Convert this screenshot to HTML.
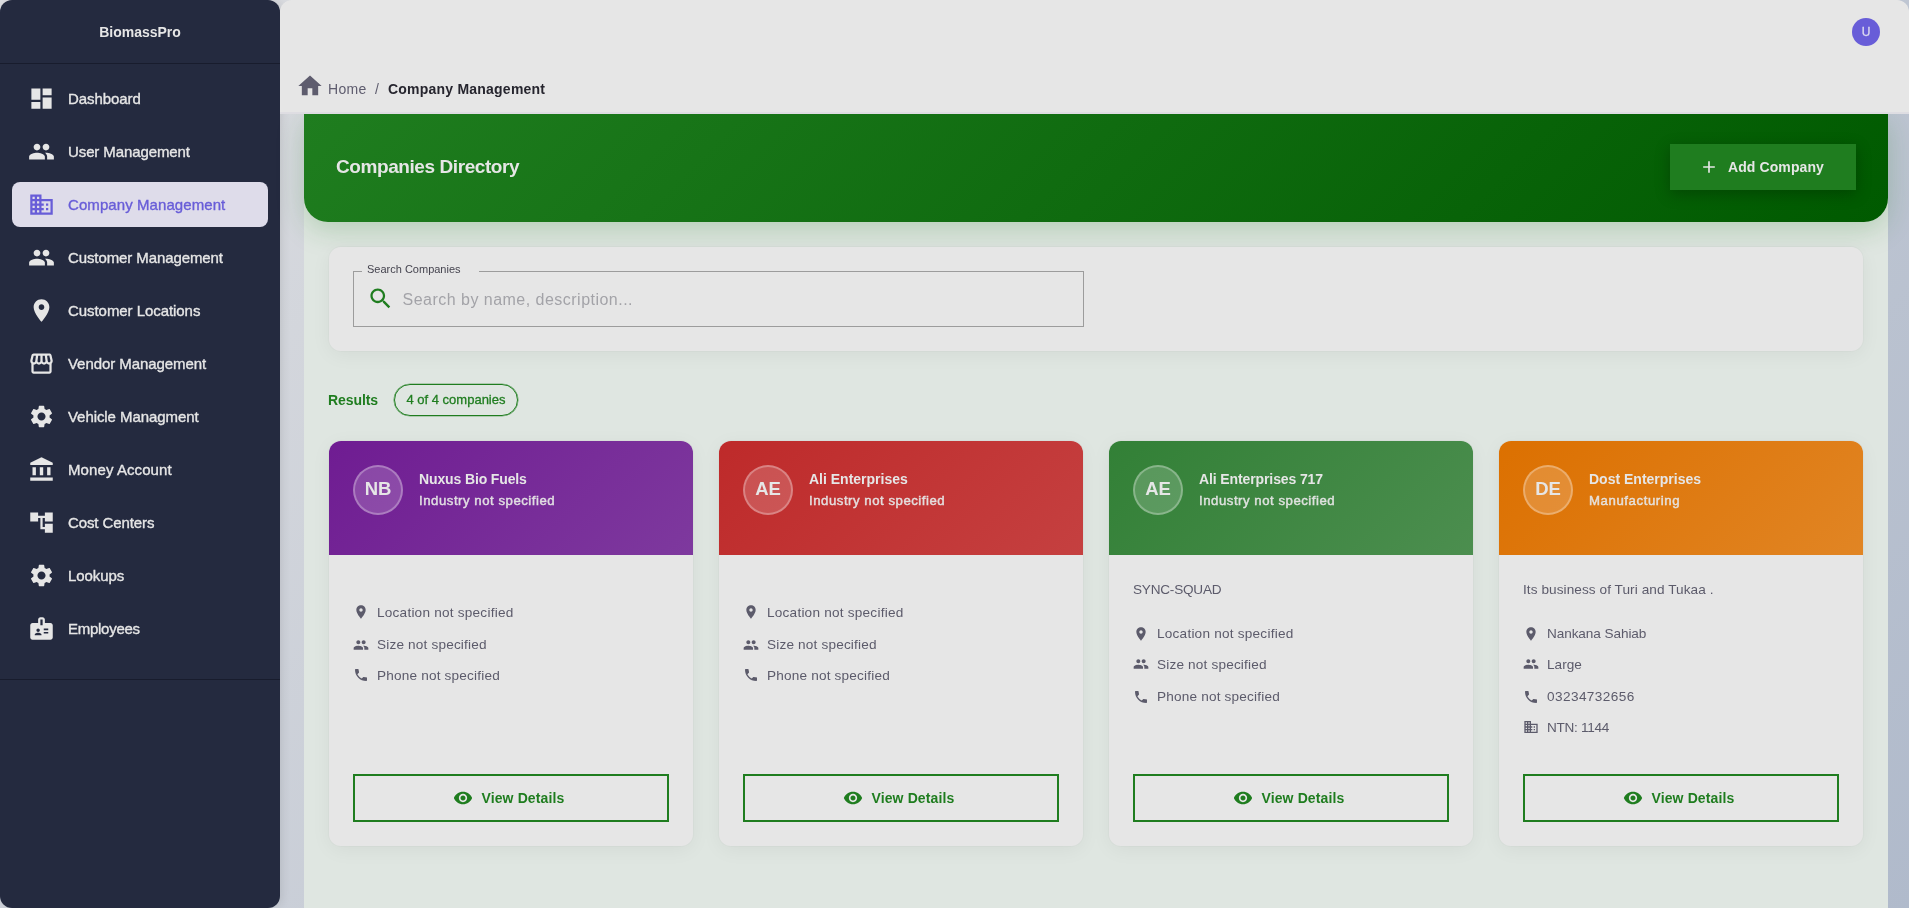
<!DOCTYPE html>
<html lang="en">
<head>
<meta charset="utf-8">
<title>BiomassPro - Company Management</title>
<style>
*{box-sizing:border-box;margin:0;padding:0}
html,body{width:1909px;height:908px;overflow:hidden}
body{font-family:"Liberation Sans",sans-serif;position:relative;
 background:linear-gradient(135deg,#dddee1 0%,#b0bacb 100%);color:#5c5b6b}
.abs{position:absolute}
svg{display:block}
.t{position:absolute;white-space:nowrap;line-height:1}

/* sidebar */
#sidebar{position:absolute;left:0;top:0;width:280px;height:908px;background:#242a3f;border-radius:12px;box-shadow:2px 0 10px rgba(0,0,0,.10)}
#sidebar .brand{left:0;width:280px;text-align:center;top:25px;font-size:14px;font-weight:700;color:#e6e6e6}
#sidebar .hr{position:absolute;left:0;width:280px;height:1px;background:#181c2d}
.nav{position:absolute;left:12px;width:256px;height:45px;border-radius:8px;color:#e6e6e6}
.nav svg{position:absolute;left:15.8px;top:9px;width:27px;height:27px;fill:currentColor}
.nav .t{left:56px;top:15px;font-size:15px;font-weight:400;-webkit-text-stroke:.35px currentColor}
.nav.sel{background:#dedcea;color:#685dd8}

/* topbar */
#topbar{position:absolute;left:280px;top:0;width:1629px;height:114px;border-radius:12px 12px 0 0;
 background:linear-gradient(180deg,#e6e6e6 0,#e6e6e6 111.5px,#dedde2 112.5px,#dedde2 114px)}
#avatar{position:absolute;left:1852px;top:18px;width:28px;height:28px;border-radius:50%;background:#685dd8;color:#dddbf0;font-size:12px;text-align:center;line-height:28px;-webkit-text-stroke:.3px currentColor}

/* main */
#main{position:absolute;left:304px;top:113px;width:1584px;height:795px;background:#dfe6e1}
#banner{position:absolute;left:304px;top:114px;width:1584px;height:108px;border-radius:0 0 24px 24px;
 background:linear-gradient(135deg,#1f7d1f 0%,#005a00 100%);box-shadow:0 8px 28px rgba(31,125,31,.22)}
#addbtn{position:absolute;left:1670px;top:144px;width:186px;height:46px;background:#1f7d1f;box-shadow:0 4px 14px rgba(0,0,0,.25);color:#e6e6e6}
.card{position:absolute;background:#e6e6e6;border-radius:12px;box-shadow:0 4px 20px rgba(0,0,0,.05),0 0 0 1px rgba(0,0,0,.025);overflow:hidden}

/* breadcrumb */
#crumb svg{position:absolute;left:295.6px;top:72px;width:28px;height:28px;fill:#5e5c6e}
#crumb .home{left:328px;top:82px;font-size:14px;color:#5e5c6e;letter-spacing:.35px}
#crumb .sep{left:375px;top:82px;font-size:14px;color:#5e5c6e}
#crumb .cur{left:388px;top:82px;font-size:14px;font-weight:700;color:#26252e;letter-spacing:.22px}
#title{left:336px;top:157px;font-size:19px;font-weight:700;color:#e6e6e6;letter-spacing:-.42px}
#addbtn svg{position:absolute;left:29px;top:13px;width:20px;height:20px;fill:#e6e6e6}
#addbtn .t{left:58px;top:16px;font-size:14px;font-weight:700;color:#e6e6e6;letter-spacing:.1px}
/* search */
#searchcard{left:329px;top:247px;width:1534px;height:104px}
#field{position:absolute;left:353px;top:271px;width:731px;height:56px;border:1px solid #9c9c9c}
#field .gap{position:absolute;left:8px;top:-1px;width:117px;height:1px;background:#e6e6e6}
#field .lab{left:13px;top:-9px;font-size:11px;color:#45444f;line-height:12px}
#field svg{position:absolute;left:12.8px;top:13.1px;width:27.2px;height:27.2px;fill:#1f7d1f}
#field .ph{left:48.5px;top:20px;font-size:16px;color:#a3a3a8;letter-spacing:.48px}
#results{left:328px;top:393px;font-size:14px;font-weight:700;color:#1f7d1f;letter-spacing:-.08px}
#chip{position:absolute;left:394px;top:384px;width:124px;height:32px;border:1px solid #1f7d1f;box-shadow:0 0 0 .35px #1f7d1f;border-radius:16px;color:#1f7d1f;font-size:13px;text-align:center;line-height:30px;-webkit-text-stroke:.3px currentColor}
/* company cards */
.cc{top:441px;width:364px;height:405px}
.cc .hd{position:absolute;left:0;top:0;width:364px;height:114px}
.cc .av{position:absolute;left:24px;top:24px;width:50px;height:50px;border-radius:50%;background:rgba(255,255,255,.18);border:2px solid rgba(255,255,255,.28);color:#e6e6e6;font-size:18.5px;font-weight:700;text-align:center;line-height:44.4px}
.cc .nm{left:90px;top:31px;font-size:14px;font-weight:700;color:#e6e6e6}
.cc .ind{left:90px;top:52.5px;font-size:13.2px;color:rgba(230,230,230,.92);-webkit-text-stroke:.45px currentColor}
.cc .desc{left:24px;top:142px;font-size:13.6px;color:#5c5b6b}
.row{position:absolute;left:24px;height:16px}
.row svg{position:absolute;left:0;top:0;width:16px;height:16px;fill:#5c5b6b}
.row .t{left:24px;top:1.3px;font-size:13.6px;color:#5c5b6b}
.vbtn{position:absolute;left:24px;top:333px;width:316px;height:48px;border:2px solid #1f7d1f;color:#1f7d1f}
.vbtn svg{position:absolute;left:98px;top:12px;width:20px;height:20px;fill:#1f7d1f}
.vbtn .t{left:126.5px;top:15px;font-size:14px;font-weight:700;color:#1f7d1f;letter-spacing:.12px}
#root{position:absolute;left:0;top:0;width:1909px;height:908px;will-change:transform}
</style>
</head>
<body>
<div id="root">
<div id="sidebar">
 <div class="t brand">BiomassPro</div>
 <div class="hr" style="top:63px"></div>
 <div class="nav" style="top:76px"><svg viewBox="0 0 24 24"><path d="M3 13h8V3H3v10zm0 8h8v-6H3v6zm10 0h8V11h-8v10zm0-18v6h8V3h-8z"/></svg><div class="t" style="letter-spacing:-0.08px">Dashboard</div></div>
 <div class="nav" style="top:129px"><svg viewBox="0 0 24 24"><path d="M16 11c1.66 0 2.99-1.34 2.99-3S17.66 5 16 5c-1.66 0-3 1.34-3 3s1.34 3 3 3zm-8 0c1.66 0 2.99-1.34 2.99-3S9.66 5 8 5C6.34 5 5 6.34 5 8s1.34 3 3 3zm0 2c-2.33 0-7 1.17-7 3.5V19h14v-2.5c0-2.33-4.67-3.5-7-3.5zm8 0c-.29 0-.62.02-.97.05 1.16.84 1.97 1.97 1.97 3.45V19h6v-2.5c0-2.33-4.67-3.5-7-3.5z"/></svg><div class="t" style="letter-spacing:-0.1px">User Management</div></div>
 <div class="nav sel" style="top:182px"><svg viewBox="0 0 24 24"><path d="M12 7V3H2v18h20V7H12zM6 19H4v-2h2v2zm0-4H4v-2h2v2zm0-4H4V9h2v2zm0-4H4V5h2v2zm4 12H8v-2h2v2zm0-4H8v-2h2v2zm0-4H8V9h2v2zm0-4H8V5h2v2zm10 12h-8v-2h2v-2h-2v-2h2v-2h-2V9h8v10zm-2-8h-2v2h2v-2zm0 4h-2v2h2v-2z"/></svg><div class="t" style="letter-spacing:0.08px">Company Management</div></div>
 <div class="nav" style="top:235px"><svg viewBox="0 0 24 24"><path d="M16 11c1.66 0 2.99-1.34 2.99-3S17.66 5 16 5c-1.66 0-3 1.34-3 3s1.34 3 3 3zm-8 0c1.66 0 2.99-1.34 2.99-3S9.66 5 8 5C6.34 5 5 6.34 5 8s1.34 3 3 3zm0 2c-2.33 0-7 1.17-7 3.5V19h14v-2.5c0-2.33-4.67-3.5-7-3.5zm8 0c-.29 0-.62.02-.97.05 1.16.84 1.97 1.97 1.97 3.45V19h6v-2.5c0-2.33-4.67-3.5-7-3.5z"/></svg><div class="t" style="letter-spacing:-0.1px">Customer Management</div></div>
 <div class="nav" style="top:288px"><svg viewBox="0 0 24 24"><path d="M12 2C8.13 2 5 5.13 5 9c0 5.25 7 13 7 13s7-7.75 7-13c0-3.87-3.13-7-7-7zm0 9.5c-1.38 0-2.5-1.12-2.5-2.5s1.12-2.5 2.5-2.5 2.5 1.12 2.5 2.5-1.12 2.5-2.5 2.5z"/></svg><div class="t" style="letter-spacing:-0.06px">Customer Locations</div></div>
 <div class="nav" style="top:341px"><svg viewBox="0 0 24 24"><path d="M21.9 8.89l-1.05-4.37c-.22-.9-1-1.52-1.91-1.52H5.05c-.9 0-1.69.63-1.9 1.52L2.1 8.89c-.24 1.02-.02 2.06.62 2.88.08.11.19.19.28.29V19c0 1.1.9 2 2 2h14c1.1 0 2-.9 2-2v-6.94c.09-.09.2-.18.28-.28.64-.82.87-1.87.62-2.89zm-2.99-3.9l1.05 4.37c.1.42.01.84-.25 1.17-.14.18-.44.47-.94.47-.61 0-1.14-.49-1.21-1.14L16.98 5l1.93-.01zM13 5h1.96l.54 4.52c.05.39-.07.78-.33 1.07-.22.26-.54.41-.95.41-.67 0-1.22-.59-1.22-1.31V5zM8.49 9.52L9.04 5H11v4.69c0 .72-.55 1.31-1.29 1.31-.34 0-.65-.15-.89-.41-.25-.29-.37-.68-.33-1.07zm-4.45-.16L5.05 5h1.97l-.58 4.86c-.08.65-.6 1.14-1.21 1.14-.49 0-.8-.29-.93-.47-.27-.32-.36-.75-.26-1.17zM5 19v-6.03c.08.01.15.03.23.03.87 0 1.66-.36 2.24-.95.6.6 1.4.95 2.31.95.87 0 1.65-.36 2.23-.93.59.57 1.39.93 2.29.93.84 0 1.64-.35 2.24-.95.58.59 1.37.95 2.24.95.08 0 .15-.02.23-.03V19H5z"/></svg><div class="t" style="letter-spacing:-0.07px">Vendor Management</div></div>
 <div class="nav" style="top:394px"><svg viewBox="0 0 24 24"><path d="M19.14 12.94c.04-.3.06-.61.06-.94 0-.32-.02-.64-.07-.94l2.03-1.58c.18-.14.23-.41.12-.61l-1.92-3.32c-.12-.22-.37-.29-.59-.22l-2.39.96c-.5-.38-1.03-.7-1.62-.94l-.36-2.54c-.04-.24-.24-.41-.48-.41h-3.84c-.24 0-.43.17-.47.41l-.36 2.54c-.59.24-1.13.57-1.62.94l-2.39-.96c-.22-.08-.47 0-.59.22L2.74 8.87c-.12.21-.08.47.12.61l2.03 1.58c-.05.3-.09.63-.09.94s.02.64.07.94l-2.03 1.58c-.18.14-.23.41-.12.61l1.92 3.32c.12.22.37.29.59.22l2.39-.96c.5.38 1.03.7 1.62.94l.36 2.54c.05.24.24.41.48.41h3.84c.24 0 .44-.17.47-.41l.36-2.54c.59-.24 1.13-.56 1.62-.94l2.39.96c.22.08.47 0 .59-.22l1.92-3.32c.12-.22.07-.47-.12-.61l-2.01-1.58zM12 15.6c-1.98 0-3.6-1.62-3.6-3.6s1.62-3.6 3.6-3.6 3.6 1.62 3.6 3.6-1.62 3.6-3.6 3.6z"/></svg><div class="t" style="letter-spacing:-0.07px">Vehicle Managment</div></div>
 <div class="nav" style="top:447px"><svg viewBox="0 0 24 24"><path d="M4 10h3v7H4zM10.5 10h3v7h-3zM2 19h20v3H2zM17 10h3v7h-3zM12 1L2 6v2h20V6z"/></svg><div class="t" style="letter-spacing:0.09px">Money Account</div></div>
 <div class="nav" style="top:500px"><svg viewBox="0 0 24 24"><path d="M22 11V3h-7v3H9V3H2v8h7V8h2v10h4v3h7v-8h-7v3h-2V8h2v3z"/></svg><div class="t" style="letter-spacing:-0.1px">Cost Centers</div></div>
 <div class="nav" style="top:553px"><svg viewBox="0 0 24 24"><path d="M19.14 12.94c.04-.3.06-.61.06-.94 0-.32-.02-.64-.07-.94l2.03-1.58c.18-.14.23-.41.12-.61l-1.92-3.32c-.12-.22-.37-.29-.59-.22l-2.39.96c-.5-.38-1.03-.7-1.62-.94l-.36-2.54c-.04-.24-.24-.41-.48-.41h-3.84c-.24 0-.43.17-.47.41l-.36 2.54c-.59.24-1.13.57-1.62.94l-2.39-.96c-.22-.08-.47 0-.59.22L2.74 8.87c-.12.21-.08.47.12.61l2.03 1.58c-.05.3-.09.63-.09.94s.02.64.07.94l-2.03 1.58c-.18.14-.23.41-.12.61l1.92 3.32c.12.22.37.29.59.22l2.39-.96c.5.38 1.03.7 1.62.94l.36 2.54c.05.24.24.41.48.41h3.84c.24 0 .44-.17.47-.41l.36-2.54c.59-.24 1.13-.56 1.62-.94l2.39.96c.22.08.47 0 .59-.22l1.92-3.32c.12-.22.07-.47-.12-.61l-2.01-1.58zM12 15.6c-1.98 0-3.6-1.62-3.6-3.6s1.62-3.6 3.6-3.6 3.6 1.62 3.6 3.6-1.62 3.6-3.6 3.6z"/></svg><div class="t" style="letter-spacing:-0.06px">Lookups</div></div>
 <div class="nav" style="top:606px"><svg viewBox="0 0 24 24"><path d="M20 7h-5V4c0-1.1-.9-2-2-2h-2c-1.1 0-2 .9-2 2v3H4c-1.1 0-2 .9-2 2v11c0 1.1.9 2 2 2h16c1.1 0 2-.9 2-2V9c0-1.1-.9-2-2-2zM9 12c.83 0 1.5.67 1.5 1.5S9.83 15 9 15s-1.5-.67-1.5-1.5S8.17 12 9 12zm3 6H6v-.75c0-1 2-1.5 3-1.5s3 .5 3 1.5V18zm1-9h-2V4h2v5zm5 7.5h-4V15h4v1.5zm0-3h-4V12h4v1.5z"/></svg><div class="t" style="letter-spacing:-0.27px">Employees</div></div>
 <div class="hr" style="top:679px"></div>
</div>
<div id="main"></div>
<div id="banner"></div>
<div id="topbar"></div>
<div id="avatar">U</div>
<div id="crumb"><svg viewBox="0 0 24 24"><path d="M10 20v-6h4v6h5v-8h3L12 3 2 12h3v8z"/></svg><div class="t home">Home</div><div class="t sep">/</div><div class="t cur">Company Management</div></div>
<div class="t" id="title">Companies Directory</div>
<div id="addbtn"><svg viewBox="0 0 24 24"><path d="M19 13h-6v6h-2v-6H5v-2h6V5h2v6h6v2z"/></svg><div class="t">Add Company</div></div>
<div class="card abs" id="searchcard"></div>
<div id="field"><div class="gap"></div><div class="t lab">Search Companies</div><svg viewBox="0 0 24 24"><path d="M15.5 14h-.79l-.28-.27C15.41 12.59 16 11.11 16 9.5 16 5.91 13.09 3 9.5 3S3 5.91 3 9.5 5.91 16 9.5 16c1.61 0 3.09-.59 4.23-1.57l.27.28v.79l5 4.99L20.49 19l-4.99-5zm-6 0C7.01 14 5 11.99 5 9.5S7.01 5 9.5 5 14 7.01 14 9.5 11.99 14 9.5 14z"/></svg><div class="t ph">Search by name, description...</div></div>
<div class="t" id="results">Results</div>
<div id="chip">4 of 4 companies</div>
<div class="card cc abs" style="left:329px"><div class="hd" style="background:linear-gradient(135deg,#6f1c92 0%,#7e399e 100%)"></div><div class="av">NB</div><div class="t nm" style="letter-spacing:-0.13px">Nuxus Bio Fuels</div><div class="t ind" style="letter-spacing:0.526px">Industry not specified</div><div class="row" style="top:163.3px"><svg viewBox="0 0 24 24"><path d="M12 2C8.13 2 5 5.13 5 9c0 5.25 7 13 7 13s7-7.75 7-13c0-3.87-3.13-7-7-7zm0 9.5c-1.38 0-2.5-1.12-2.5-2.5s1.12-2.5 2.5-2.5 2.5 1.12 2.5 2.5-1.12 2.5-2.5 2.5z"/></svg><div class="t" style="letter-spacing:0.225px">Location not specified</div></div><div class="row" style="top:195.5px"><svg viewBox="0 0 24 24"><path d="M16 11c1.66 0 2.99-1.34 2.99-3S17.66 5 16 5c-1.66 0-3 1.34-3 3s1.34 3 3 3zm-8 0c1.66 0 2.99-1.34 2.99-3S9.66 5 8 5C6.34 5 5 6.34 5 8s1.34 3 3 3zm0 2c-2.33 0-7 1.17-7 3.5V19h14v-2.5c0-2.33-4.67-3.5-7-3.5zm8 0c-.29 0-.62.02-.97.05 1.16.84 1.97 1.97 1.97 3.45V19h6v-2.5c0-2.33-4.67-3.5-7-3.5z"/></svg><div class="t" style="letter-spacing:0.172px">Size not specified</div></div><div class="row" style="top:226.3px"><svg viewBox="0 0 24 24"><path d="M6.62 10.79c1.44 2.83 3.76 5.14 6.59 6.59l2.2-2.2c.27-.27.67-.36 1.02-.24 1.12.37 2.33.57 3.57.57.55 0 1 .45 1 1V20c0 .55-.45 1-1 1-9.39 0-17-7.61-17-17 0-.55.45-1 1-1h3.5c.55 0 1 .45 1 1 0 1.25.2 2.45.57 3.57.11.35.03.74-.25 1.02l-2.2 2.2z"/></svg><div class="t" style="letter-spacing:0.186px">Phone not specified</div></div><div class="vbtn"><svg viewBox="0 0 24 24"><path d="M12 4.5C7 4.5 2.73 7.61 1 12c1.73 4.39 6 7.5 11 7.5s9.27-3.11 11-7.5c-1.73-4.39-6-7.5-11-7.5zM12 17c-2.76 0-5-2.24-5-5s2.24-5 5-5 5 2.24 5 5-2.24 5-5 5zm0-8c-1.66 0-3 1.34-3 3s1.34 3 3 3 3-1.34 3-3-1.34-3-3-3z"/></svg><div class="t">View Details</div></div></div>
<div class="card cc abs" style="left:719px"><div class="hd" style="background:linear-gradient(135deg,#be2a2a 0%,#c54040 100%)"></div><div class="av">AE</div><div class="t nm">Ali Enterprises</div><div class="t ind" style="letter-spacing:0.526px">Industry not specified</div><div class="row" style="top:163.3px"><svg viewBox="0 0 24 24"><path d="M12 2C8.13 2 5 5.13 5 9c0 5.25 7 13 7 13s7-7.75 7-13c0-3.87-3.13-7-7-7zm0 9.5c-1.38 0-2.5-1.12-2.5-2.5s1.12-2.5 2.5-2.5 2.5 1.12 2.5 2.5-1.12 2.5-2.5 2.5z"/></svg><div class="t" style="letter-spacing:0.225px">Location not specified</div></div><div class="row" style="top:195.5px"><svg viewBox="0 0 24 24"><path d="M16 11c1.66 0 2.99-1.34 2.99-3S17.66 5 16 5c-1.66 0-3 1.34-3 3s1.34 3 3 3zm-8 0c1.66 0 2.99-1.34 2.99-3S9.66 5 8 5C6.34 5 5 6.34 5 8s1.34 3 3 3zm0 2c-2.33 0-7 1.17-7 3.5V19h14v-2.5c0-2.33-4.67-3.5-7-3.5zm8 0c-.29 0-.62.02-.97.05 1.16.84 1.97 1.97 1.97 3.45V19h6v-2.5c0-2.33-4.67-3.5-7-3.5z"/></svg><div class="t" style="letter-spacing:0.172px">Size not specified</div></div><div class="row" style="top:226.3px"><svg viewBox="0 0 24 24"><path d="M6.62 10.79c1.44 2.83 3.76 5.14 6.59 6.59l2.2-2.2c.27-.27.67-.36 1.02-.24 1.12.37 2.33.57 3.57.57.55 0 1 .45 1 1V20c0 .55-.45 1-1 1-9.39 0-17-7.61-17-17 0-.55.45-1 1-1h3.5c.55 0 1 .45 1 1 0 1.25.2 2.45.57 3.57.11.35.03.74-.25 1.02l-2.2 2.2z"/></svg><div class="t" style="letter-spacing:0.186px">Phone not specified</div></div><div class="vbtn"><svg viewBox="0 0 24 24"><path d="M12 4.5C7 4.5 2.73 7.61 1 12c1.73 4.39 6 7.5 11 7.5s9.27-3.11 11-7.5c-1.73-4.39-6-7.5-11-7.5zM12 17c-2.76 0-5-2.24-5-5s2.24-5 5-5 5 2.24 5 5-2.24 5-5 5zm0-8c-1.66 0-3 1.34-3 3s1.34 3 3 3 3-1.34 3-3-1.34-3-3-3z"/></svg><div class="t">View Details</div></div></div>
<div class="card cc abs" style="left:1109px"><div class="hd" style="background:linear-gradient(135deg,#328036 0%,#4c8e4f 100%)"></div><div class="av">AE</div><div class="t nm" style="letter-spacing:-0.11px">Ali Enterprises 717</div><div class="t ind" style="letter-spacing:0.526px">Industry not specified</div><div class="t desc" style="letter-spacing:-0.228px">SYNC-SQUAD</div><div class="row" style="top:185px"><svg viewBox="0 0 24 24"><path d="M12 2C8.13 2 5 5.13 5 9c0 5.25 7 13 7 13s7-7.75 7-13c0-3.87-3.13-7-7-7zm0 9.5c-1.38 0-2.5-1.12-2.5-2.5s1.12-2.5 2.5-2.5 2.5 1.12 2.5 2.5-1.12 2.5-2.5 2.5z"/></svg><div class="t" style="letter-spacing:0.225px">Location not specified</div></div><div class="row" style="top:215.4px"><svg viewBox="0 0 24 24"><path d="M16 11c1.66 0 2.99-1.34 2.99-3S17.66 5 16 5c-1.66 0-3 1.34-3 3s1.34 3 3 3zm-8 0c1.66 0 2.99-1.34 2.99-3S9.66 5 8 5C6.34 5 5 6.34 5 8s1.34 3 3 3zm0 2c-2.33 0-7 1.17-7 3.5V19h14v-2.5c0-2.33-4.67-3.5-7-3.5zm8 0c-.29 0-.62.02-.97.05 1.16.84 1.97 1.97 1.97 3.45V19h6v-2.5c0-2.33-4.67-3.5-7-3.5z"/></svg><div class="t" style="letter-spacing:0.172px">Size not specified</div></div><div class="row" style="top:247.8px"><svg viewBox="0 0 24 24"><path d="M6.62 10.79c1.44 2.83 3.76 5.14 6.59 6.59l2.2-2.2c.27-.27.67-.36 1.02-.24 1.12.37 2.33.57 3.57.57.55 0 1 .45 1 1V20c0 .55-.45 1-1 1-9.39 0-17-7.61-17-17 0-.55.45-1 1-1h3.5c.55 0 1 .45 1 1 0 1.25.2 2.45.57 3.57.11.35.03.74-.25 1.02l-2.2 2.2z"/></svg><div class="t" style="letter-spacing:0.186px">Phone not specified</div></div><div class="vbtn"><svg viewBox="0 0 24 24"><path d="M12 4.5C7 4.5 2.73 7.61 1 12c1.73 4.39 6 7.5 11 7.5s9.27-3.11 11-7.5c-1.73-4.39-6-7.5-11-7.5zM12 17c-2.76 0-5-2.24-5-5s2.24-5 5-5 5 2.24 5 5-2.24 5-5 5zm0-8c-1.66 0-3 1.34-3 3s1.34 3 3 3 3-1.34 3-3-1.34-3-3-3z"/></svg><div class="t">View Details</div></div></div>
<div class="card cc abs" style="left:1499px"><div class="hd" style="background:linear-gradient(135deg,#dc7000 0%,#e18524 100%)"></div><div class="av">DE</div><div class="t nm">Dost Enterprises</div><div class="t ind" style="letter-spacing:0.588px">Manufacturing</div><div class="t desc" style="letter-spacing:0.074px">Its business of Turi and Tukaa .</div><div class="row" style="top:185px"><svg viewBox="0 0 24 24"><path d="M12 2C8.13 2 5 5.13 5 9c0 5.25 7 13 7 13s7-7.75 7-13c0-3.87-3.13-7-7-7zm0 9.5c-1.38 0-2.5-1.12-2.5-2.5s1.12-2.5 2.5-2.5 2.5 1.12 2.5 2.5-1.12 2.5-2.5 2.5z"/></svg><div class="t" style="letter-spacing:-0.091px">Nankana Sahiab</div></div><div class="row" style="top:215.4px"><svg viewBox="0 0 24 24"><path d="M16 11c1.66 0 2.99-1.34 2.99-3S17.66 5 16 5c-1.66 0-3 1.34-3 3s1.34 3 3 3zm-8 0c1.66 0 2.99-1.34 2.99-3S9.66 5 8 5C6.34 5 5 6.34 5 8s1.34 3 3 3zm0 2c-2.33 0-7 1.17-7 3.5V19h14v-2.5c0-2.33-4.67-3.5-7-3.5zm8 0c-.29 0-.62.02-.97.05 1.16.84 1.97 1.97 1.97 3.45V19h6v-2.5c0-2.33-4.67-3.5-7-3.5z"/></svg><div class="t" style="letter-spacing:0.003px">Large</div></div><div class="row" style="top:247.8px"><svg viewBox="0 0 24 24"><path d="M6.62 10.79c1.44 2.83 3.76 5.14 6.59 6.59l2.2-2.2c.27-.27.67-.36 1.02-.24 1.12.37 2.33.57 3.57.57.55 0 1 .45 1 1V20c0 .55-.45 1-1 1-9.39 0-17-7.61-17-17 0-.55.45-1 1-1h3.5c.55 0 1 .45 1 1 0 1.25.2 2.45.57 3.57.11.35.03.74-.25 1.02l-2.2 2.2z"/></svg><div class="t" style="letter-spacing:0.413px">03234732656</div></div><div class="row" style="top:278.4px"><svg viewBox="0 0 24 24"><path d="M12 7V3H2v18h20V7H12zM6 19H4v-2h2v2zm0-4H4v-2h2v2zm0-4H4V9h2v2zm0-4H4V5h2v2zm4 12H8v-2h2v2zm0-4H8v-2h2v2zm0-4H8V9h2v2zm0-4H8V5h2v2zm10 12h-8v-2h2v-2h-2v-2h2v-2h-2V9h8v10zm-2-8h-2v2h2v-2zm0 4h-2v2h2v-2z"/></svg><div class="t" style="letter-spacing:-0.306px">NTN: 1144</div></div><div class="vbtn"><svg viewBox="0 0 24 24"><path d="M12 4.5C7 4.5 2.73 7.61 1 12c1.73 4.39 6 7.5 11 7.5s9.27-3.11 11-7.5c-1.73-4.39-6-7.5-11-7.5zM12 17c-2.76 0-5-2.24-5-5s2.24-5 5-5 5 2.24 5 5-2.24 5-5 5zm0-8c-1.66 0-3 1.34-3 3s1.34 3 3 3 3-1.34 3-3-1.34-3-3-3z"/></svg><div class="t">View Details</div></div></div>
</div>
</body>
</html>
